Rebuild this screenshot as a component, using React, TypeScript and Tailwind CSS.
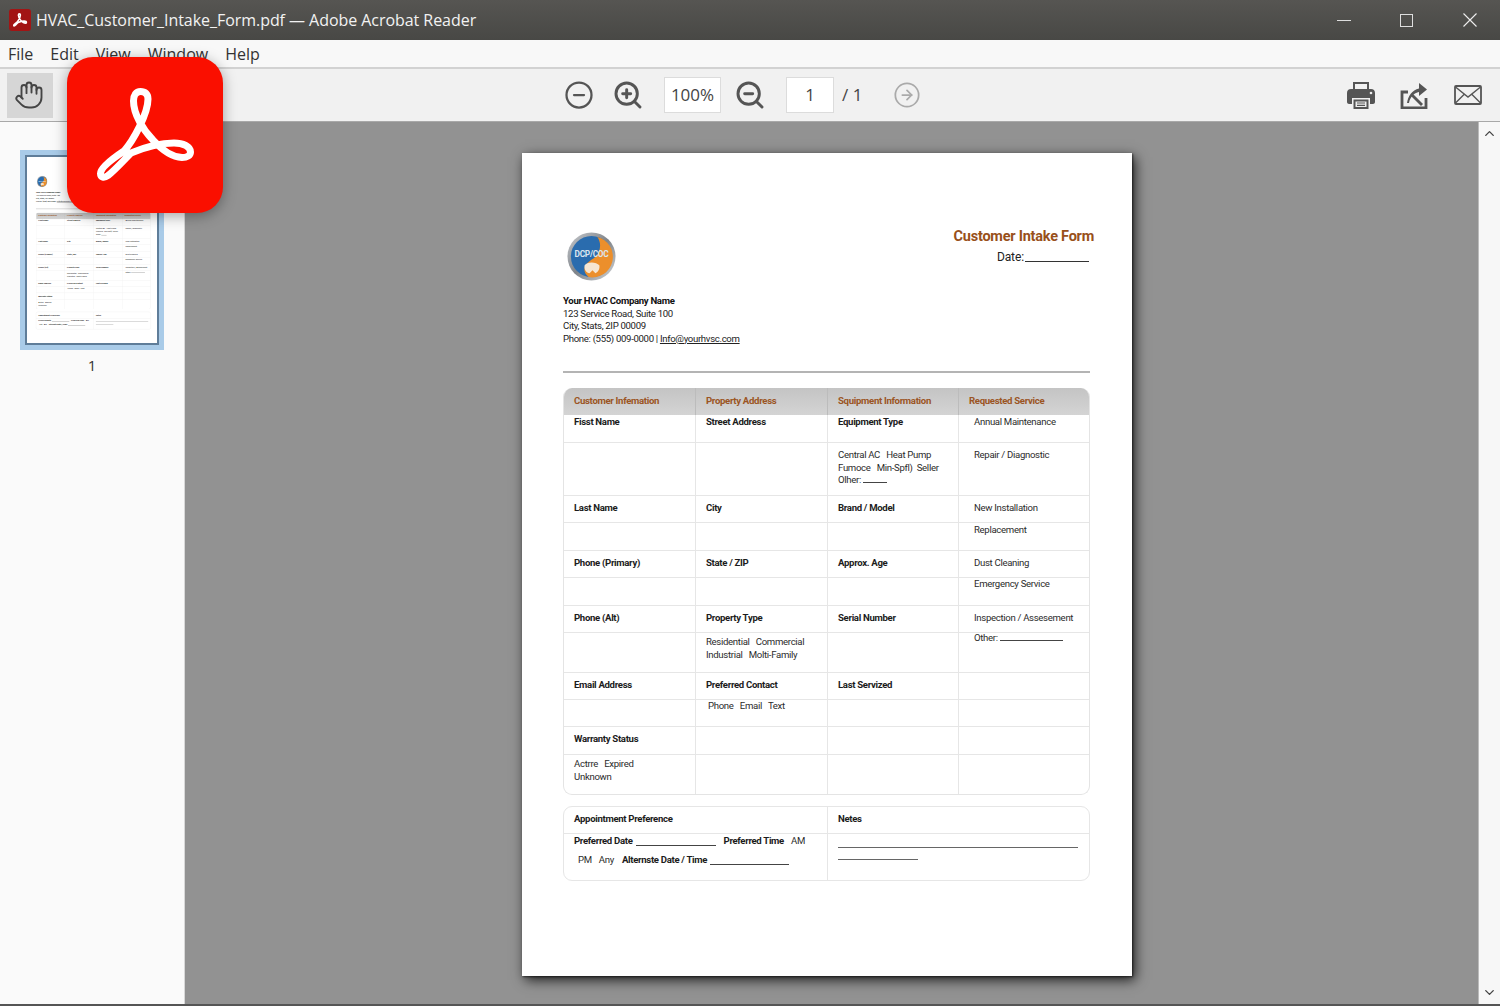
import React from "react";
import { Hand, CircleMinus, ZoomIn, ZoomOut, CircleArrowRight, ChevronUp, ChevronDown } from "lucide-react";

const ribbon =
  "M81 42 C81 37 78 34.5 73.5 34.5 C69 34.5 66.5 38 66.5 44 C66.5 57 76 73 86 83 C94 92 105 100 115 100.5 C120 100.5 123.5 98.5 123.5 95 C123.5 89.5 116 86 107 86 C92 86 76 91 64 96 C56 104 48 113 41 118.5 C37 121.5 33.5 120.5 33.5 116.5 C33.5 111 45 102 57 94 C66 84 81 57 81 42 Z";

function Ribbon({ className, width }: { className: string; width: number }) {
  return (
    <svg viewBox="0 0 156 156" className={className} fill="none">
      <path d={ribbon} stroke="#fff" strokeWidth={width} strokeLinejoin="round" />
    </svg>
  );
}

function CompanyLogo() {
  return (
    <svg viewBox="0 0 50 50" className="w-[49px] h-[49px]">
      <defs>
        <linearGradient id="ring" x1="0" y1="0" x2="1" y2="1">
          <stop offset="0" stopColor="#c9ccd0" />
          <stop offset="0.5" stopColor="#7f8489" />
          <stop offset="1" stopColor="#d4d6d8" />
        </linearGradient>
      </defs>
      <circle cx="25" cy="25" r="24.5" fill="url(#ring)" />
      <circle cx="25" cy="25" r="21" fill="#2a6cae" />
      <path d="M31 5 A21 21 0 0 1 22 46 C13 38 20 31 27 27 C34 22 36 12 31 5 Z" fill="#ec8f2b" />
      <path d="M18 34 C20 30 30 30 33 34 C34 39 30 42 29 42 L26 39 L23 42 C20 42 17 38 18 34 Z" fill="#f6e6d2" />
      <text x="25" y="26" textAnchor="middle" fontSize="8.5" fontWeight="700" fill="#dbe6ef" fontFamily="Roboto, sans-serif">DCP/COC</text>
    </svg>
  );
}

const B = ({ children }: { children: React.ReactNode }) => (
  <span className="font-bold text-[#1c1c1c]">{children}</span>
);
const Line = ({ w }: { w: string }) => <span className={`inline-block border-b border-[#444] align-baseline h-[1px] ${w}`} />;

type Cell = React.ReactNode;
const rows: { h: string; align: string; cells: Cell[] }[] = [
  { h: "h-[28px]", align: "pt-[1px]", cells: [<B>Fisst Name</B>, <B>Street Address</B>, <B>Equipment Type</B>, <span className="pl-[5px]">Annual Maintenance</span>] },
  { h: "h-[53px]", align: "pt-[6px]", cells: ["", "", <>Central AC&nbsp;&nbsp; Heat Pump<br />Fumoce&nbsp;&nbsp; Min-Spfl)&nbsp;&nbsp;Seller<br />Olher: <Line w="w-[24px]" /></>, <span className="pl-[5px]">Repair / Diagnostic</span>] },
  { h: "h-[27px]", align: "pt-[6px]", cells: [<B>Last Name</B>, <B>City</B>, <B>Brand / Model</B>, <span className="pl-[5px]">New Installation</span>] },
  { h: "h-[28px]", align: "pt-[1px]", cells: ["", "", "", <span className="pl-[5px]">Replacement</span>] },
  { h: "h-[27px]", align: "pt-[6px]", cells: [<B>Phone (Primary)</B>, <B>State / ZIP</B>, <B>Approx. Age</B>, <span className="pl-[5px]">Dust Cleaning</span>] },
  { h: "h-[28px]", align: "pt-[0px]", cells: ["", "", "", <span className="pl-[5px]">Emergency Service</span>] },
  { h: "h-[27px]", align: "pt-[6px]", cells: [<B>Phone (Alt)</B>, <B>Property Type</B>, <B>Serial Number</B>, <span className="pl-[5px]">Inspection / Assesement</span>] },
  { h: "h-[40px]", align: "pt-[0px]", cells: ["", <span className="block pt-[3px]">Residential&nbsp;&nbsp; Commercial<br />Industrial&nbsp;&nbsp; Molti-Family</span>, "", <span className="block -mt-[1px] pl-[5px]">Other: <Line w="w-[63px]" /></span>] },
  { h: "h-[27px]", align: "pt-[6px]", cells: [<B>Email Address</B>, <B>Preferred Contact</B>, <B>Last Servized</B>, ""] },
  { h: "h-[27px]", align: "pt-[0px]", cells: ["", <span className="pl-[2px]">Phone&nbsp;&nbsp; Email&nbsp;&nbsp; Text</span>, "", ""] },
  { h: "h-[28px]", align: "pt-[6px]", cells: [<B>Warranty Status</B>, "", "", ""] },
  { h: "h-[39px]", align: "pt-[3px]", cells: [<>Actrre&nbsp;&nbsp; Expired<br />Unknown</>, "", "", ""] },
];

const cols = "grid grid-cols-[131px_132px_131px_131px]";

function Page() {
  return (
    <div className="w-[610px] h-[823px] bg-white pt-[79px] pl-[41px] pr-[42px] text-[9.6px] leading-[12.5px] tracking-[-0.32px] text-[#2c2c2c] font-['Roboto',sans-serif]">
      <div className="flex justify-between">
        <div className="pl-[4px]">
          <CompanyLogo />
        </div>
        <div className="flex flex-col items-end -mr-[4px]">
          <div className="text-[14.5px] leading-[18px] font-bold text-[#98501a] tracking-[-0.24px] -mt-[4px]">Customer Intake Form</div>
          <div className="text-[12px] leading-[14px] text-[#222] mt-[4px] pr-[5px] flex items-end tracking-[-0.1px]">
            Date: <span className="inline-block w-[64px] h-[1px] border-b border-[#333] ml-[1px] mb-[2px]" />
          </div>
        </div>
      </div>
      <div className="mt-[14px] text-[#222]">
        <div className="font-bold text-[#111]">Your HVAC Company Name</div>
        <div>123 Service Road, Suite 100</div>
        <div>City, Stats, 2IP 00009</div>
        <div>Phone: (555) 009-0000 | <span className="underline">Info@yourhvsc.com</span></div>
      </div>
      <div className="h-[2px] bg-[#b4b4b4] mt-[26px]" />
      <div className="mt-[15px] w-[527px] rounded-[9px] border-x border-b border-[#e4e4e4] overflow-hidden">
        <div className={`${cols} h-[27px] bg-gradient-to-b from-[#c4c4c4] to-[#d4d4d4] items-center`}>
          {["Customer Infemation", "Property Address", "Squipment Information", "Requested Service"].map((t, i) => (
            <div key={t} className={`h-full pl-[10px] flex items-center font-bold text-[#9b5524] ${i ? "border-l border-[#bcbcbc]" : ""}`}>{t}</div>
          ))}
        </div>
        {rows.map((r, i) => (
          <div key={i} className={`${cols} ${r.h} ${i < rows.length - 1 ? "border-b" : ""} border-[#e6e6e6]`}>
            {r.cells.map((c, j) => (
              <div key={j} className={`pl-[10px] ${r.align} ${j ? "border-l border-[#e6e6e6]" : ""} whitespace-nowrap`}>{c}</div>
            ))}
          </div>
        ))}
      </div>
      <div className="mt-[11px] w-[527px] h-[75px] rounded-[9px] border border-[#e6e6e6] grid grid-cols-[263px_262px] grid-rows-[27px_1fr]">
        <div className="pl-[10px] pt-[6px] border-b border-[#e6e6e6]"><B>Appointment Preference</B></div>
        <div className="pl-[10px] pt-[6px] border-b border-l border-[#e6e6e6]"><B>Netes</B></div>
        <div className="pl-[10px] whitespace-nowrap">
          <div className="flex items-end h-[13px]">
            <B>Preferred Date</B>
            <Line w="w-[80px] ml-[3px] mb-[1px]" />
            <span className="ml-[8px]"><B>Preferred Time</B></span>
            <span className="ml-[7px]">AM</span>
          </div>
          <div className="flex items-end h-[13px] mt-[6px] pl-[4px]">
            <span>PM</span>
            <span className="ml-[7px]">Any</span>
            <span className="ml-[8px]"><B>Alternste Date / Time</B></span>
            <Line w="w-[79px] ml-[3px] mb-[1px]" />
          </div>
        </div>
        <div className="border-l border-[#e6e6e6] pl-[10px] pt-[13px]">
          <div className="w-[240px] h-[1px] bg-[#666]" />
          <div className="w-[80px] h-[1px] bg-[#666] mt-[11px]" />
        </div>
      </div>
    </div>
  );
}

function Printer() {
  return (
    <svg viewBox="0 0 30 30" className="w-[30px] h-[30px]">
      <path d="M7 2 H23 V10 H21 V4 H9 V10 H7 Z" fill="#555" />
      <path d="M5 9 H25 C27.5 9 29 10.5 29 13 V22 C29 23 28 24 27 24 H24 V18 H6 V24 H3 C2 24 1 23 1 22 V13 C1 10.5 2.5 9 5 9 Z" fill="#555" />
      <circle cx="25" cy="13" r="1.3" fill="#eee" />
      <path d="M7.5 19.5 H22.5 V29 H7.5 Z" fill="#555" />
      <path d="M9.5 21.5 H20.5 V27 H9.5 Z" fill="#eee" />
      <path d="M11 23 H19 M11 25.3 H19" stroke="#555" strokeWidth="1.2" />
    </svg>
  );
}
function Share() {
  return (
    <svg viewBox="0 0 28 28" className="w-[28px] h-[28px]">
      <path d="M8 11 H2 V27 H26 V17" fill="none" stroke="#555" strokeWidth="2.8" />
      <path d="M8 23 C9 16 13 10 20 8.5 V3 L28 9.5 L20 16 V12 C15 13 11 17 10 23" fill="#555" transform="translate(-1 -1)" />
      <path d="M12 14 L22 24" stroke="#555" strokeWidth="2.8" />
    </svg>
  );
}
function Mail() {
  return (
    <svg viewBox="0 0 28 20" className="w-[28px] h-[20px]" fill="none" stroke="#555">
      <rect x="1" y="1" width="26" height="18" rx="1" strokeWidth="1.8" />
      <path d="M1.5 2 L14 12 L26.5 2 M1.5 18 L10 9.5 M26.5 18 L18 9.5" strokeWidth="1.4" />
    </svg>
  );
}

export default function App() {
  return (
    <div className="relative w-[1500px] h-[1006px] overflow-hidden flex flex-col bg-[#555] font-['Open_Sans',sans-serif]">
      <div className="h-[40px] shrink-0 bg-gradient-to-b from-[#565552] to-[#484845] flex items-center text-[#f2f2f2]">
        <div className="ml-[9px] w-[22px] h-[22px] rounded-[3px] bg-[#a21414] flex items-center justify-center">
          <Ribbon className="w-[22px] h-[22px]" width={11} />
        </div>
        <span className="ml-[5px] text-[16px] tracking-[-0.05px] whitespace-nowrap">HVAC_Customer_Intake_Form.pdf — Adobe Acrobat Reader</span>
        <div className="ml-auto flex items-center">
          <div className="w-[14px] h-[1px] bg-[#dedede]" />
          <div className="ml-[49px] w-[13px] h-[13px] border border-[#dedede]" />
          <svg viewBox="0 0 14 14" className="ml-[50px] mr-[23px] w-[14px] h-[14px]" stroke="#eee" strokeWidth="1.1"><path d="M0.5 0.5 L13.5 13.5 M13.5 0.5 L0.5 13.5" /></svg>
        </div>
      </div>
      <div className="h-[29px] shrink-0 bg-[#f8f8f8] border-b-2 border-[#d2d2d2] flex items-center pt-[1px] text-[16px] text-[#333] pl-[8px] gap-[17px]">
        <span>File</span><span>Edit</span><span>View</span><span>Window</span><span>Help</span>
      </div>
      <div className="h-[53px] shrink-0 bg-[#f1f1f1] border-b border-[#a8a8a8] flex items-center text-[#444] pl-[7px]">
        <div className="w-[46px] h-[45px] bg-[#d6d6d6] flex items-center justify-center pr-[2px]">
          <Hand size={30} strokeWidth={1.5} className="text-[#444]" />
        </div>
        <CircleMinus size={30} strokeWidth={1.8} className="ml-[511px] text-[#555]" />
        <ZoomIn size={32} strokeWidth={2.2} className="ml-[18px] text-[#555]" />
        <div className="ml-[20px] w-[57px] h-[36px] bg-white border border-[#dcdcdc] flex items-center justify-center text-[17px]">100%</div>
        <ZoomOut size={32} strokeWidth={2.2} className="ml-[13px] text-[#555]" />
        <div className="ml-[20px] w-[48px] h-[36px] bg-white border border-[#dcdcdc] flex items-center justify-center text-[17px]">1</div>
        <span className="ml-[8px] text-[17px]">/ 1</span>
        <CircleArrowRight size={28} strokeWidth={1.5} className="ml-[31px] text-[#aaa]" />
        <div className="ml-auto flex items-center mr-[18px]">
          <Printer />
          <div className="ml-[24px]"><Share /></div>
          <div className="ml-[26px]"><Mail /></div>
        </div>
      </div>
      <div className="flex flex-1 min-h-0 border-b-2 border-[#555]">
        <div className="w-[185px] shrink-0 bg-[#fafafa] border-r border-[#d8d8d8] pl-[20px] pt-[28px]">
          <div className="w-[144px] h-[200px] bg-[#a9cbe8] p-[5px]">
            <div className="w-full h-full border-2 border-[#5f7d99] bg-white overflow-hidden">
              <div className="origin-top-left [transform:scale(0.218,0.237)]"><Page /></div>
            </div>
          </div>
          <div className="w-[144px] text-center text-[#333] text-[15px] mt-[4px]">1</div>
        </div>
        <div className="flex-1 bg-[#929292] pl-[337px] pt-[31px] overflow-hidden">
          <div className="w-[610px] h-[823px] shadow-[1px_1px_2px_rgba(0,0,0,0.6),3px_4px_12px_rgba(0,0,0,0.8)]">
            <Page />
          </div>
        </div>
        <div className="w-[22px] shrink-0 bg-[#f7f7f7] border-l border-[#bbb] flex flex-col items-center justify-between py-[4px] text-[#444]">
          <ChevronUp size={15} strokeWidth={2.2} />
          <ChevronDown size={15} strokeWidth={2.2} />
        </div>
      </div>
      <div className="absolute left-[67px] top-[57px] w-[156px] h-[156px] rounded-[26px] bg-[#fa0f00] shadow-[0_3px_14px_rgba(0,0,0,0.35)]">
        <Ribbon className="w-[156px] h-[156px]" width={7} />
      </div>
    </div>
  );
}
